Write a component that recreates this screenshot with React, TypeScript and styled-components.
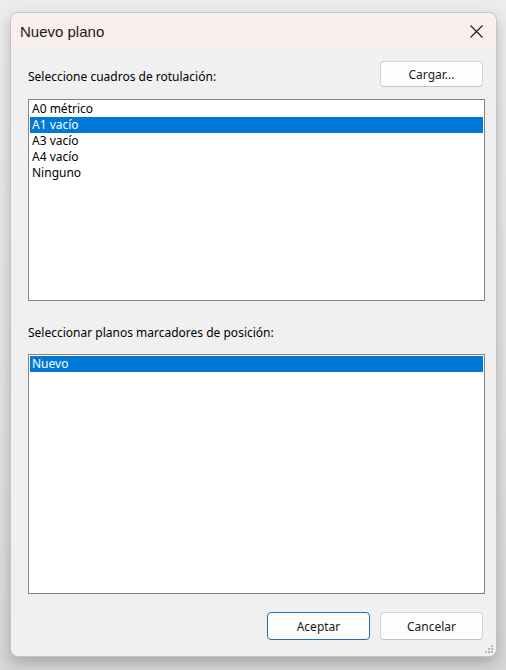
import styled, { createGlobalStyle } from "styled-components";

const GlobalStyle = createGlobalStyle`
  html, body {
    margin: 0;
    padding: 0;
    background: #e4e4e4;
  }
  body {
    font-family: "Noto Sans", "Liberation Sans", Arial, sans-serif;
  }
`;

const itemsRotulacion = ["A0 métrico", "A1 vacío", "A3 vacío", "A4 vacío", "Ninguno"];
const itemsPlanos = ["Nuevo"];

const App = () => {
  return (
    <Page>
      <GlobalStyle />
      <Window>
        <TitleBar>
          <TitleText>Nuevo plano</TitleText>
          <CloseButton>
            <svg width="13" height="13" viewBox="0 0 13 13">
              <path d="M0.5 0.5 L12.5 12.5 M12.5 0.5 L0.5 12.5" stroke="#1a1a1a" strokeWidth="1.1" fill="none" />
            </svg>
          </CloseButton>
        </TitleBar>
        <Content>
          <HeaderRow>
            <Label>Seleccione cuadros de rotulación:</Label>
            <Button>Cargar...</Button>
          </HeaderRow>
          <ListBox $height={202}>
            {itemsRotulacion.map((item, i) => (
              <ListItem key={item} $selected={i === 1}>
                {item}
              </ListItem>
            ))}
          </ListBox>
          <SecondLabel>Seleccionar planos marcadores de posición:</SecondLabel>
          <ListBox $height={240}>
            {itemsPlanos.map((item, i) => (
              <ListItem key={item} $selected={i === 0}>
                {item}
              </ListItem>
            ))}
          </ListBox>
          <Footer>
            <Button $primary $tall>
              Aceptar
            </Button>
            <Button $tall>Cancelar</Button>
          </Footer>
        </Content>
        <SizeGrip>
          <svg width="10" height="10" viewBox="0 0 10 10">
            <rect x="7" y="1" width="2" height="2" fill="#b5b5b5" />
            <rect x="4" y="4" width="2" height="2" fill="#b5b5b5" />
            <rect x="7" y="4" width="2" height="2" fill="#b5b5b5" />
            <rect x="1" y="7" width="2" height="2" fill="#b5b5b5" />
            <rect x="4" y="7" width="2" height="2" fill="#b5b5b5" />
            <rect x="7" y="7" width="2" height="2" fill="#b5b5b5" />
          </svg>
        </SizeGrip>
      </Window>
    </Page>
  );
};

const Page = styled.div`
  width: 506px;
  height: 670px;
  box-sizing: border-box;
  padding: 12px 9px 13px 10px;
  background: linear-gradient(#ececec, #e2e2e2 60%, #d6d6d6);
  overflow: hidden;
`;

const Window = styled.div`
  position: relative;
  width: 487px;
  height: 645px;
  box-sizing: border-box;
  display: flex;
  flex-direction: column;
  border: 1px solid #c4c4c4;
  border-radius: 8px;
  overflow: hidden;
  background: #f0f0f0;
  box-shadow: 0 6px 14px rgba(0, 0, 0, 0.22);
`;

const TitleBar = styled.div`
  display: flex;
  align-items: center;
  justify-content: space-between;
  height: 35px;
  padding: 0 13px 0 9px;
  background: #f9efed;
  flex-shrink: 0;
`;

const TitleText = styled.div`
  font-family: "Liberation Sans", Arial, sans-serif;
  font-size: 15px;
  color: #1a1a1a;
  padding-top: 2px;
`;

const CloseButton = styled.div`
  display: flex;
  align-items: center;
  justify-content: center;
  width: 14px;
  height: 14px;
  margin-top: 2px;
`;

const Content = styled.div`
  display: flex;
  flex-direction: column;
  padding: 13px 11px 0 17px;
  flex: 1;
`;

const HeaderRow = styled.div`
  display: flex;
  align-items: flex-end;
  justify-content: space-between;
  padding-right: 2px;
  margin-bottom: 12px;
`;

const Label = styled.div`
  font-size: 12px;
  line-height: 16px;
  color: #000;
  margin-bottom: 2px;
`;

const SecondLabel = styled(Label)`
  margin: 24px 0 13px;
`;

const Button = styled.div<{ $primary?: boolean; $tall?: boolean }>`
  display: flex;
  align-items: center;
  justify-content: center;
  width: 103px;
  height: ${(p) => (p.$tall ? 28 : 26)}px;
  box-sizing: border-box;
  border: 1px solid ${(p) => (p.$primary ? "#1f6fb5" : "#d3d3d3")};
  border-bottom-color: ${(p) => (p.$primary ? "#1f6fb5" : "#c2c2c2")};
  border-radius: 4px;
  background: #fdfdfd;
  font-size: 12px;
  color: #1a1a1a;
  user-select: none;
`;

const ListBox = styled.div<{ $height: number }>`
  height: ${(p) => p.$height}px;
  box-sizing: border-box;
  border: 1px solid #838383;
  background: #fff;
  padding: 1px;
`;

const ListItem = styled.div<{ $selected?: boolean }>`
  height: 16px;
  line-height: 16px;
  padding-left: 2px;
  font-size: 12px;
  color: ${(p) => (p.$selected ? "#fff" : "#000")};
  background: ${(p) => (p.$selected ? "#0078d7" : "transparent")};
`;

const Footer = styled.div`
  display: flex;
  justify-content: flex-end;
  gap: 10px;
  margin-top: 18px;
  padding-right: 2px;
`;

const SizeGrip = styled.div`
  position: absolute;
  right: 2px;
  bottom: 2px;
  width: 10px;
  height: 10px;
  display: flex;
`;

export default App;
